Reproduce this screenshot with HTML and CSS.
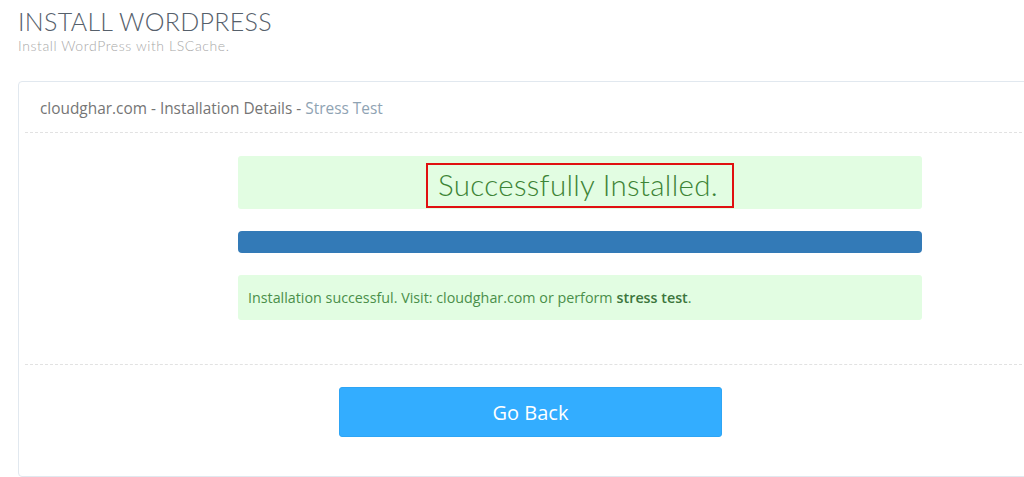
FILE: index.html
```html
<!DOCTYPE html>
<html lang="en">
<head>
  <meta charset="UTF-8">
  <title>Install WordPress</title>
  <link rel="stylesheet" href="styles.css">
</head>
<body>

<div class="page-head">
  <h1 class="page-title">INSTALL WORDPRESS</h1>
  <p class="page-sub">Install WordPress with LSCache.</p>
</div>

<div class="panel">
  <div class="panel-heading">
    cloudghar.com - Installation Details - <span class="stress-link">Stress Test</span>
  </div>

  <div class="panel-body">
    <div class="result-col">
      <div class="alert alert-title">
        <span class="success-box">Successfully Installed.</span>
      </div>
      <div class="progress">
        <div class="progress-bar"></div>
      </div>
      <div class="alert alert-msg">
        Installation successful. Visit: cloudghar.com or perform <strong>stress test</strong>.
      </div>
    </div>
  </div>

  <div class="panel-footer">
    <button class="back-btn">Go Back</button>
  </div>
</div>

</body>
</html>
```

FILE: styles.css
```css
body {
  margin: 0;
  font-family: 'Open Sans', sans-serif;
  background-color: #fff;
  overflow: hidden;
}

.page-head {
  padding: 7px 18px 0;
}

.page-title {
  margin: 0;
  font-family: 'Lato', sans-serif;
  font-weight: 300;
  font-size: 25px;
  line-height: 28px;
  color: #56606b;
  letter-spacing: 0.3px;
}

.page-sub {
  margin: 3px 0 0;
  font-family: 'Lato', sans-serif;
  font-weight: 300;
  font-size: 14px;
  line-height: 16px;
  letter-spacing: 0.6px;
  color: #a8a8a8;
}

.panel {
  margin: 27px 0 0 18px;
  width: 1040px;
  height: 396px;
  border: 1px solid #e1e8ef;
  border-radius: 4px;
  box-sizing: border-box;
}

.panel-heading {
  height: 51px;
  margin-left: 6px;
  padding: 3px 0 0 15px;
  box-sizing: border-box;
  display: flex;
  align-items: center;
  font-size: 15.4px;
  color: #757575;
  border-bottom: 1px dashed #e2e2e2;
}

.stress-link {
  color: #8fa3b3;
  margin-left: 4px;
}

.panel-body {
  padding: 23px 0 0 213px;
  height: 208px;
  margin-left: 6px;
  border-bottom: 1px dashed #e2e2e2;
}

.result-col {
  width: 684px;
  display: flex;
  flex-direction: column;
}

.alert {
  background-color: #e2fde2;
  border-radius: 3px;
  color: #3f8a3f;
}

.alert-title {
  height: 53px;
  display: flex;
  justify-content: center;
  padding-top: 7px;
  box-sizing: border-box;
}

.success-box {
  border: 2px solid #e01010;
  height: 45px;
  box-sizing: border-box;
  padding: 0 14px 0 10px;
  font-family: 'Lato', sans-serif;
  font-weight: 300;
  font-size: 29.5px;
  line-height: 40px;
  letter-spacing: 0.3px;
  color: #3d8436;
}

.progress {
  margin-top: 22px;
  height: 22px;
  border-radius: 4px;
  overflow: hidden;
}

.progress-bar {
  height: 100%;
  width: 100%;
  background-color: #337ab7;
}

.alert-msg {
  margin-top: 22px;
  height: 45px;
  padding: 0 10px;
  display: flex;
  align-items: center;
  font-size: 14.3px;
  color: #4a8f4a;
}

.alert-msg strong {
  font-weight: 600;
  color: #3c763d;
  margin-left: 4px;
}

.panel-footer {
  padding: 22px 0 0 320px;
}

.back-btn {
  width: 383px;
  height: 50px;
  border: 1px solid #2ea5f5;
  border-radius: 3px;
  background-color: #33adff;
  color: #fff;
  font-family: 'Open Sans', sans-serif;
  font-size: 20px;
  cursor: pointer;
}
```
